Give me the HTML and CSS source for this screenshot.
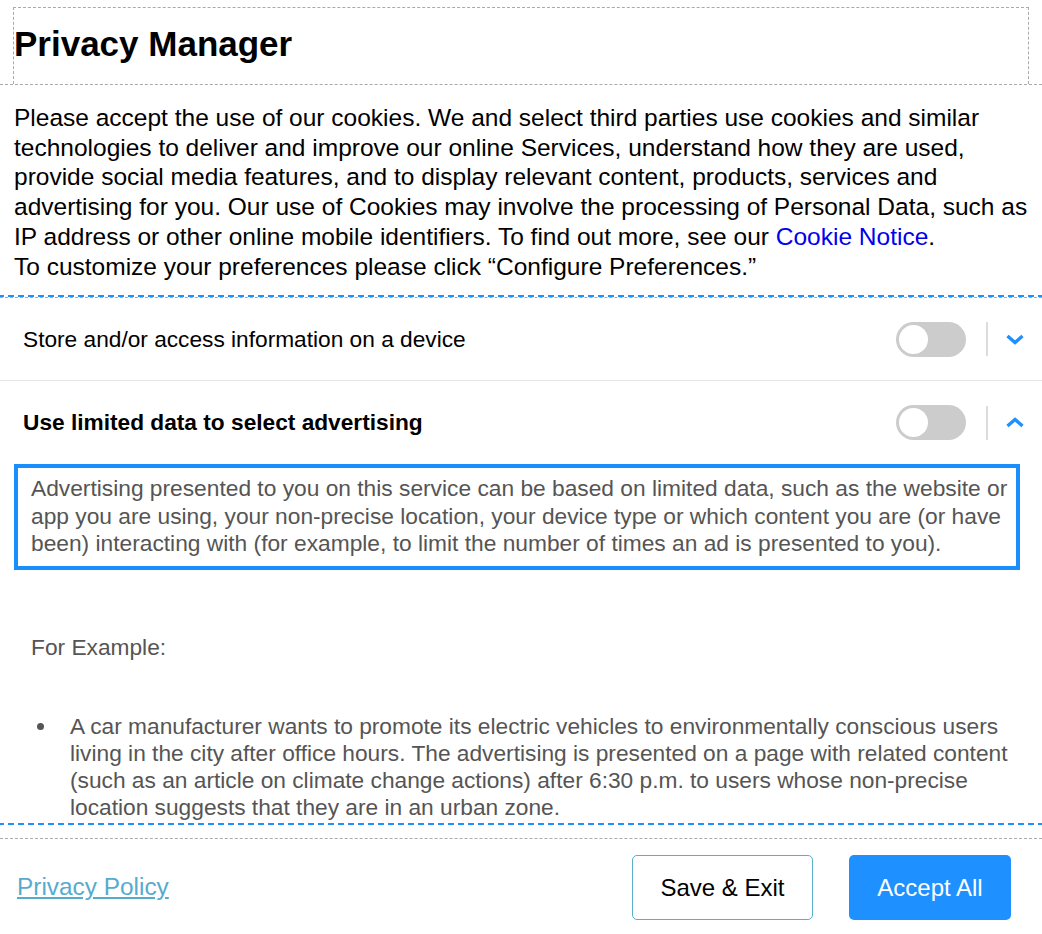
FILE: index.html
```html
<!DOCTYPE html>
<html lang="en">
<head>
<meta charset="utf-8">
<title>Privacy Manager</title>
<link rel="stylesheet" href="styles.css">
</head>
<body>
<div class="pm">
  <div class="head-wrap">
    <header class="head"><h1 class="title">Privacy Manager</h1></header>
  </div>
  <p class="intro">Please accept the use of our cookies. We and select third parties use cookies and similar technologies to deliver and improve our online Services, understand how they are used, provide social media features, and to display relevant content, products, services and advertising for you. Our use of Cookies may involve the processing of Personal Data, such as IP address or other online mobile identifiers. To find out more, see our <a class="notice" href="#">Cookie Notice</a>.<br>To customize your preferences please click “Configure Preferences.”</p>
  <div class="scroll">
    <div class="row">
      <div class="row-head">
        <span class="row-title">Store and/or access information on a device</span>
        <span class="toggle"><span class="knob"></span></span>
        <span class="divider"></span>
        <svg class="chev" width="18" height="11" viewBox="0 0 18 11"><path d="M1.5 2 L9 8.5 L16.5 2" fill="none" stroke="#1e90ff" stroke-width="3.4"/></svg>
      </div>
    </div>
    <div class="row open">
      <div class="row-head">
        <span class="row-title bold">Use limited data to select advertising</span>
        <span class="toggle"><span class="knob"></span></span>
        <span class="divider"></span>
        <svg class="chev" width="18" height="11" viewBox="0 0 18 11"><path d="M1.5 9 L9 2.5 L16.5 9" fill="none" stroke="#1e90ff" stroke-width="3.4"/></svg>
      </div>
      <div class="desc">Advertising presented to you on this service can be based on limited data, such as the website or app you are using, your non-precise location, your device type or which content you are (or have been) interacting with (for example, to limit the number of times an ad is presented to you).</div>
      <div class="detail">
        <p class="ex">For Example:</p>
        <ul class="list">
          <li>A car manufacturer wants to promote its electric vehicles to environmentally conscious users living in the city after office hours. The advertising is presented on a page with related content (such as an article on climate change actions) after 6:30 p.m. to users whose non-precise location suggests that they are in an urban zone.</li>
          <li>A large producer of watercolour paints wants to carry out an online advertising campaign for its latest watercolour range, diversifying its audience to reach as many amateur and professional artists as possible.</li>
        </ul>
      </div>
    </div>
  </div>
  <footer class="foot">
    <a class="policy" href="#">Privacy Policy</a>
    <div class="buttons">
      <button class="btn save">Save &amp; Exit</button>
      <button class="btn accept">Accept All</button>
    </div>
  </footer>
</div>
</body>
</html>
```
FILE: styles.css
```css
html, body {
  margin: 0;
  padding: 0;
  background: #fff;
}
body {
  font-family: "Liberation Sans", Arial, sans-serif;
  color: #000;
  width: 1042px;
  height: 934px;
  overflow: hidden;
}
.pm {
  display: flex;
  flex-direction: column;
  height: 934px;
}
.head-wrap {
  border-bottom: 1px dashed #aaa;
  padding: 7px 13px 0 13px;
  flex: none;
}
.head {
  border: 1px dashed #aaa;
  border-bottom: none;
  height: 77px;
  box-sizing: border-box;
}
.title {
  margin: 0;
  font-size: 35px;
  font-weight: bold;
  line-height: 72px;
  padding-left: 0;
}
.intro {
  margin: 18px 0 0 0;
  padding: 0 14px;
  font-size: 24.5px;
  line-height: 29.7px;
  height: 178px;
  flex: none;
}
.notice {
  color: #0000ee;
  text-decoration: none;
}
.scroll {
  margin-top: 16px;
  border-top: 1px dashed #aaa;
  outline: 2px dashed #1e90ff;
  height: 525px;
  overflow: hidden;
  flex: none;
}
.row {
  border-bottom: 1px solid #e6e6e6;
}
.row.open {
  border-bottom: none;
}
.row-head {
  display: flex;
  align-items: center;
  height: 82px;
  padding: 0 18px 0 23px;
}
.open .row-head {
  height: 83px;
}
.row-title {
  flex: 1;
  font-size: 22.7px;
}
.row-title.bold {
  font-weight: bold;
}
.toggle {
  position: relative;
  width: 70px;
  height: 35px;
  border-radius: 18px;
  background: #cccccc;
  flex: none;
}
.knob {
  position: absolute;
  left: 3px;
  top: 3px;
  width: 29px;
  height: 29px;
  border-radius: 50%;
  background: #fff;
}
.divider {
  width: 2px;
  height: 34px;
  background: #dcdcdc;
  margin: 0 18px 0 20px;
  flex: none;
}
.chev {
  flex: none;
  display: block;
}
.desc {
  margin: 0 22px 0 14px;
  border: 4px solid #1a8ffc;
  padding: 7px 6px 8px 13px;
  font-size: 22.75px;
  line-height: 27.5px;
  color: #555;
}
.detail {
  padding: 0 20px 0 31px;
  color: #555;
  font-size: 22.72px;
  line-height: 27px;
}
.ex {
  margin: 64px 0 0 0;
}
.list {
  margin: 52px 0 0 0;
  padding-left: 39px;
  list-style: none;
}
.list li {
  position: relative;
  margin-bottom: 27px;
}
.list li::before {
  content: "";
  position: absolute;
  left: -33px;
  top: 10px;
  width: 7px;
  height: 7px;
  border-radius: 50%;
  background: #555;
}
.foot {
  margin-top: 15px;
  border-top: 1px dashed #aaa;
  flex: 1;
  display: flex;
  align-items: flex-start;
  justify-content: space-between;
  padding: 16px 31px 0 17px;
}
.policy {
  font-size: 24.4px;
  color: #56abcf;
  text-decoration: underline;
  margin-top: 18px;
}
.buttons {
  display: flex;
  gap: 36px;
}
.btn {
  font-family: "Liberation Sans", Arial, sans-serif;
  font-size: 24px;
  height: 65px;
  border-radius: 5px;
  cursor: pointer;
}
.save {
  width: 181px;
  background: #fff;
  color: #000;
  border: 1px solid #5aaecd;
}
.accept {
  width: 162px;
  background: #1e90ff;
  color: #fff;
  border: none;
}
```
